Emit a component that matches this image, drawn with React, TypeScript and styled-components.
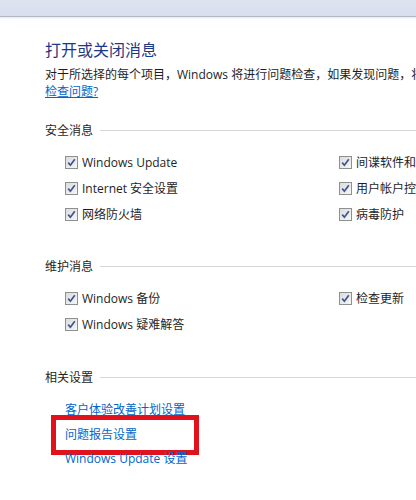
import React from "react";
import styled, { createGlobalStyle } from "styled-components";

const Global = createGlobalStyle`
  html, body { margin: 0; padding: 0; background: #ffffff; }
  body {
    overflow: hidden;
    font-family: "Open Sans", "Noto Sans CJK SC", sans-serif;
    font-size: 12px;
    color: #1e1e1e;
  }
`;

const Page = styled.div`
  width: 416px;
  height: 500px;
  overflow: hidden;
  background: #fff;
`;

const TopBar = styled.div`
  height: 16px;
  background: linear-gradient(#dfe4f1, #d8ddef);
  border-bottom: 1px solid #b1b5c4;
  box-shadow: 0 1px 2px rgba(200, 205, 225, 0.5);
`;

const Content = styled.div`
  padding: 22px 0 0 45px;
  display: flex;
  flex-direction: column;
`;

const Title = styled.h1`
  margin: 0;
  font-size: 16px;
  font-weight: normal;
  line-height: 20px;
  color: #1e3787;
  font-family: "Noto Sans CJK SC", sans-serif;
`;

const Desc = styled.div`
  margin-top: 7px;
  line-height: 17px;
  white-space: nowrap;
`;

const Link = styled.a<{ $underline?: boolean }>`
  color: #0066cc;
  text-decoration: ${(p) => (p.$underline ? "underline" : "none")};
  cursor: pointer;
`;

const Section = styled.section<{ $gap: number }>`
  margin-top: ${(p) => p.$gap}px;
  display: flex;
  flex-direction: column;
`;

const Header = styled.div`
  display: flex;
  align-items: center;
  gap: 7px;
  line-height: 17px;
  &::after {
    content: "";
    flex: 1;
    height: 1px;
    background: #d6d6d6;
  }
`;

const Grid = styled.div`
  margin-top: 10px;
  padding-left: 20px;
  display: grid;
  grid-template-columns: 274px 1fr;
  grid-auto-rows: 26px;
`;

const Item = styled.label`
  display: flex;
  align-items: center;
  gap: 4px;
  white-space: nowrap;
  overflow: hidden;
`;

const Box = styled.span`
  width: 13px;
  height: 13px;
  box-sizing: border-box;
  border: 1px solid #8e8f8f;
  background: linear-gradient(135deg, #dcdcdc, #f6f6f6);
  display: flex;
  align-items: center;
  justify-content: center;
  flex: none;
`;

const LinkList = styled.div`
  margin-top: 12px;
  padding-left: 20px;
  display: flex;
  flex-direction: column;
`;

const LinkRow = styled.div`
  position: relative;
  height: 24.5px;
  line-height: 24px;
  white-space: nowrap;
`;

const Highlight = styled.div`
  position: absolute;
  left: -14px;
  top: -8px;
  width: 148px;
  height: 40px;
  box-sizing: border-box;
  border: 5px solid #e2121d;
  pointer-events: none;
`;

const Check = () => (
  <Box>
    <svg width="9" height="9" viewBox="0 0 9 9">
      <path d="M1.2 4.6 L3.4 7.2 L7.8 1.2" fill="none" stroke="#3d5494" strokeWidth="1.7" />
    </svg>
  </Box>
);

const CheckItem = ({ text }: { text: string }) => (
  <Item>
    <Check />
    <span>{text}</span>
  </Item>
);

export default function App() {
  return (
    <Page>
      <Global />
      <TopBar />
      <Content>
        <Title>打开或关闭消息</Title>
        <Desc>
          对于所选择的每个项目，Windows 将进行问题检查，如果发现问题，将会向您发送消息。
          <br />
          <Link $underline>检查问题?</Link>
        </Desc>

        <Section $gap={22}>
          <Header>安全消息</Header>
          <Grid>
            <CheckItem text="Windows Update" />
            <CheckItem text="间谍软件和相关防护" />
            <CheckItem text="Internet 安全设置" />
            <CheckItem text="用户帐户控制" />
            <CheckItem text="网络防火墙" />
            <CheckItem text="病毒防护" />
          </Grid>
        </Section>

        <Section $gap={31}>
          <Header>维护消息</Header>
          <Grid>
            <CheckItem text="Windows 备份" />
            <CheckItem text="检查更新" />
            <CheckItem text="Windows 疑难解答" />
          </Grid>
        </Section>

        <Section $gap={32}>
          <Header>相关设置</Header>
          <LinkList>
            <LinkRow>
              <Link>客户体验改善计划设置</Link>
            </LinkRow>
            <LinkRow>
              <Link>问题报告设置</Link>
              <Highlight />
            </LinkRow>
            <LinkRow>
              <Link>Windows Update 设置</Link>
            </LinkRow>
          </LinkList>
        </Section>
      </Content>
    </Page>
  );
}
